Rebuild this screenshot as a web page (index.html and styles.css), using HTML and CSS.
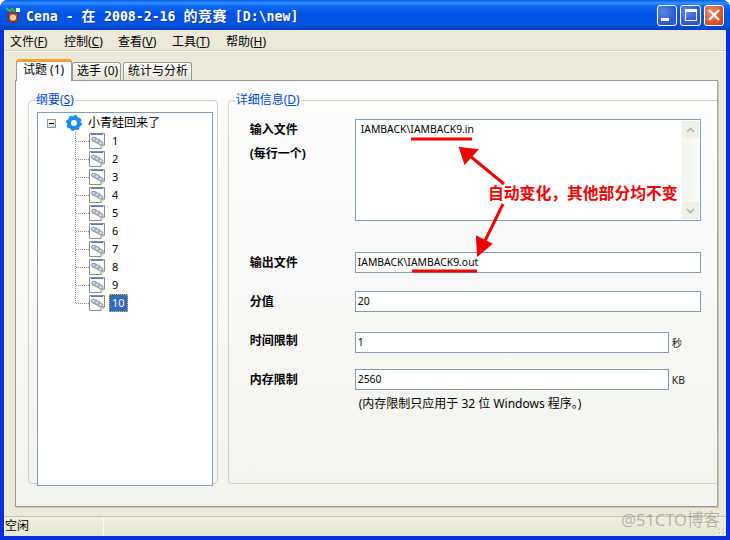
FILE: index.html
```html
<!DOCTYPE html>
<html>
<head>
    <meta charset="utf-8">
    <title>Cena</title>
    <link rel="stylesheet" href="styles.css">
</head>
<body>

<svg class="defs" width="0" height="0">
    <symbol id="case" viewBox="0 0 17 18">
        <path d="M0.500 1.500H15.500V13L12 16.500H0.500Z" fill="#fff" stroke="#8c8c86"/>
        <path d="M2 2.500H14" stroke="#4a7ae0"/>
        <path d="M15.500 13H12V16.500" fill="#f0f0ea" stroke="#8c8c86"/>
        <g fill="#d4d9e4" stroke="#8f97a4">
            <ellipse cx="5.500" cy="7.500" rx="3" ry="2" transform="rotate(25 5.500 7.500)"/>
            <ellipse cx="8.500" cy="9" rx="3" ry="2" transform="rotate(25 8.500 9)"/>
            <ellipse cx="11.500" cy="11" rx="2.500" ry="1.800" transform="rotate(25 11.500 11)"/>
        </g>
    </symbol>
</svg>

<div class="window">
    <div class="titlebar">
        <svg class="app-icon" width="16" height="16" viewBox="0 0 16 16">
            <path d="M3 6H13L12 15H4Z" fill="#d8452c" stroke="#6d2a12"/>
            <circle cx="8" cy="10.500" r="2.500" fill="#f6d75c" stroke="#fff"/>
            <path d="M1 1L6 5M6 1L10 5" stroke="#5aa83c" stroke-width="2"/>
            <path d="M11 1H15V5H11Z" fill="#f5f1e0"/>
        </svg>
        <div class="title-text">Cena - <span class="title-cjk">在</span> 2008-2-16 <span class="title-cjk">的竞赛</span> [D:\new]</div>
        <div class="title-btn min">
            <span class="glyph-min"></span>
        </div>
        <div class="title-btn">
            <span class="glyph-max"></span>
        </div>
        <div class="title-btn close">
            <svg width="14" height="14" viewBox="0 0 14 14"><path d="M2 2L12 12M12 2L2 12" stroke="#fff" stroke-width="2.400"/></svg>
        </div>
    </div>

    <div class="client">
        <div class="menubar">
            <div class="menu-item">文件(<u>F</u>)</div>
            <div class="menu-item">控制(<u>C</u>)</div>
            <div class="menu-item">查看(<u>V</u>)</div>
            <div class="menu-item">工具(<u>T</u>)</div>
            <div class="menu-item">帮助(<u>H</u>)</div>
        </div>

        <div class="tabs">
            <div class="tab active">试题 (1)</div>
            <div class="tab players">选手 (0)</div>
            <div class="tab stats">统计与分析</div>
        </div>

        <div class="tab-page">
            <fieldset class="group outline">
                <legend>纲要(<u>S</u>)</legend>
                <div class="tree">
                    <div class="tree-root">
                        <span class="expander"></span>
                        <svg class="root-icon" width="16" height="16" viewBox="0 0 16 16">
                            <circle cx="8" cy="8" r="5" fill="none" stroke="#1f8ee8" stroke-width="4"/>
                            <circle cx="8" cy="8" r="7" fill="none" stroke="#1f8ee8" stroke-width="2" stroke-dasharray="3 2.500"/>
                        </svg>
                        <span>小青蛙回来了</span>
                    </div>
                    <div class="tree-children" id="cases"></div>
                </div>
            </fieldset>

            <fieldset class="group detail">
                <legend>详细信息(<u>D</u>)</legend>

                <div class="row row-files">
                    <div class="field-label">输入文件<br>(每行一个)</div>
                    <div class="memo">
                        <div class="memo-text">IAMBACK\IAMBACK9.in</div>
                        <div class="scrollbar">
                            <div class="scroll-btn"><svg width="9" height="6" viewBox="0 0 9 6"><path d="M1 5L4.500 1.500L8 5" fill="none" stroke="#b4b4ac" stroke-width="1.600"/></svg></div>
                            <div class="scroll-btn"><svg width="9" height="6" viewBox="0 0 9 6"><path d="M1 1L4.500 4.500L8 1" fill="none" stroke="#b4b4ac" stroke-width="1.600"/></svg></div>
                        </div>
                    </div>
                </div>

                <div class="row row-output">
                    <div class="field-label">输出文件</div>
                    <div class="edit">IAMBACK\IAMBACK9.out</div>
                </div>

                <div class="row row-score">
                    <div class="field-label">分值</div>
                    <div class="edit">20</div>
                </div>

                <div class="row row-time">
                    <div class="field-label raised">时间限制</div>
                    <div class="edit short">1</div>
                    <div class="unit">秒</div>
                </div>

                <div class="row row-mem">
                    <div class="field-label">内存限制</div>
                    <div class="edit short">2560</div>
                    <div class="unit">KB</div>
                </div>

                <div class="note">(内存限制只应用于 32 位 Windows 程序。)</div>
            </fieldset>
        </div>

        <div class="statusbar">
            <div class="status-cell">空闲</div>
            <svg class="grip" width="12" height="12" viewBox="0 0 12 12">
                <path d="M9 1h2v2H9zM5 5h2v2H5zM9 5h2v2H9zM1 9h2v2H1zM5 9h2v2H5zM9 9h2v2H9z" fill="#fff"/>
                <path d="M9 1h1v1H9zM5 5h1v1H5zM9 5h1v1H9zM1 9h1v1H1zM5 9h1v1H5zM9 9h1v1H9z" fill="#a8a795"/>
            </svg>
        </div>
    </div>

    <!-- hand drawn notes lying over the dialog -->
    <svg class="marks" width="730" height="540" viewBox="0 0 730 540">
        <path d="M411 139H472M412 271H477" stroke="#f00000" stroke-width="3"/>
        <path d="M504 184L470 156" stroke="#f00000" stroke-width="3"/>
        <path d="M460 148L477 150L465 163Z" fill="#f00000" stroke="#f00000" stroke-width="2"/>
        <path d="M503 204L483 245" stroke="#f00000" stroke-width="3"/>
        <path d="M478 255L477 237L491 244Z" fill="#f00000" stroke="#f00000" stroke-width="2"/>
    </svg>
    <div class="callout">自动变化，其他部分均不变</div>
    <div class="watermark">@51CTO博客</div>
</div>

<script>
var box = document.getElementById('cases');
var html = '';
for (var i = 1; i <= 10; i++) {
    html += "<div class='case" + (i == 10 ? " selected" : "") + "'><span class='dots'></span>" +
        "<svg width='17' height='18'><use href='#case'/></svg><span class='case-name'>" + i + "</span></div>";
}
box.innerHTML = html;
</script>

</body>
</html>
```

FILE: styles.css
```css
* {
    box-sizing: border-box;
}

body {
    margin: 0;
    background-color: #fff;
    font-family: "Noto Sans", "Noto Sans CJK SC", sans-serif;
    font-size: 11px;
    color: #000;
}

.defs {
    display: block;
}

.window {
    position: relative;
    width: 730px;
    height: 540px;
    overflow: hidden;
    border-radius: 8px 8px 0 0;
    background-color: #0831d9;
    display: flex;
    flex-direction: column;
}

/* title bar */
.titlebar {
    height: 30px;
    flex: none;
    display: flex;
    align-items: center;
    padding: 0 6px 0 5px;
    gap: 3px;
    background: linear-gradient(to bottom, #0058ee 0, #3593ff 3px, #0a6af4 6px, #0053e1 14px, #0055e5 24px, #0046c8 28px, #003dd0 30px);
}

.app-icon {
    flex: none;
    margin: -1px 2px 0 0;
}

.title-text {
    flex: 1;
    margin-top: -1px;
    font-family: "DejaVu Sans Mono", monospace;
    font-size: 13.200px;
    font-weight: bold;
    color: #fff;
    white-space: pre;
    text-shadow: 1px 1px 0 #0f3aa8;
}

.title-cjk {
    font-family: "Noto Sans CJK SC", sans-serif;
    font-size: 14px;
    letter-spacing: 0.500px;
}

.title-btn {
    width: 21px;
    height: 21px;
    flex: none;
    display: flex;
    align-items: center;
    justify-content: center;
    position: relative;
    border: 1px solid #fff;
    border-radius: 3px;
    background: radial-gradient(circle at 30% 30%, #5d84e6, #2c56d0 70%, #3a5fc8);
}

.title-btn.min {
    width: 20px;
}

.title-btn.close {
    width: 20px;
    background: radial-gradient(circle at 30% 30%, #e8906c, #d9512a 65%, #c23a1a);
}

.glyph-min {
    width: 8px;
    height: 3px;
    margin: 9px 5px 0 0;
    background-color: #fff;
}

.glyph-max {
    width: 12px;
    height: 12px;
    border: 1px solid #fff;
    border-top-width: 3px;
}

/* everything inside the blue frame */
.client {
    flex: 1;
    margin: 0 4px 4px 4px;
    background-color: #ece9d8;
    display: flex;
    flex-direction: column;
    min-height: 0;
}

.menubar {
    height: 22px;
    flex: none;
    display: flex;
    align-items: center;
    padding: 0 0 0 6px;
    gap: 13px;
    border-bottom: 1px solid #fbfaf4;
    box-shadow: inset 0 -1px 0 #d2cfbd;
    font-size: 12px;
}

.menu-item {
    width: 41px;
    white-space: nowrap;
}

.tabs {
    flex: none;
    height: 22px;
    margin: 7px 0 0 12px;
    display: flex;
    align-items: flex-end;
    position: relative;
    z-index: 1;
    font-size: 12px;
}

.tab {
    height: 18px;
    margin-right: 2px;
    margin-bottom: 1px;
    padding: 0 0 0 4px;
    line-height: 16px;
    border: 1px solid #919b9c;
    border-bottom: none;
    border-radius: 3px 3px 0 0;
    background: linear-gradient(to bottom, #fff, #f0efe7 60%, #e4e2d4);
    white-space: nowrap;
}

.tab.players {
    width: 49px;
}

.tab.stats {
    width: 69px;
}

.tab.active {
    width: 56px;
    height: 22px;
    margin-bottom: 0;
    margin-right: 0;
    padding: 0 0 0 6px;
    line-height: 16px;
    border-top: 3px solid #f2a22c;
    background: #fcfcfe;
}

.tab-page {
    width: 703px;
    height: 427px;
    flex: none;
    margin: -1px 0 0 11px;
    padding: 12px 0 0 12px;
    display: flex;
    align-items: flex-start;
    gap: 10px;
    border: 1px solid #919b9c;
    border-right-color: #a0a5a8;
    border-bottom-color: #8f98a0;
    box-shadow: 1px 1px 0 #c8c6b6;
    background: linear-gradient(to bottom, #fdfdfe, #f4f3ee);
}

.group {
    margin: 0;
    min-width: 0;
    height: 391px;
    border: 1px solid #d0d0bf;
    border-radius: 4px;
    font-size: 12px;
}

.group legend {
    color: #0046d5;
    padding: 0 1px;
    line-height: 14px;
}

.outline {
    width: 190px;
    padding: 5px 4px 3px 8px;
}

.outline legend {
    margin-left: -2px;
}

.tree {
    height: 374px;
    padding: 2px 0 0 9px;
    background-color: #fff;
    border: 1px solid #7f9db9;
}

.tree-root {
    height: 16px;
    display: flex;
    align-items: center;
    gap: 10px;
    line-height: 16px;
}

.expander {
    position: relative;
    width: 9px;
    height: 9px;
    flex: none;
    border: 1px solid #8a9aa8;
    background: linear-gradient(135deg, #fff, #d8d5c8);
}

.expander::after {
    content: "";
    position: absolute;
    left: 1px;
    top: 3px;
    width: 5px;
    height: 1px;
    background-color: #000;
}

.root-icon {
    flex: none;
    margin-right: -4px;
}

.tree-children {
    margin: 1px 0 0 28px;
    border-left: 1px dotted #8a8a8a;
    height: 171px;
}

.case {
    height: 18px;
    display: flex;
    align-items: center;
}

.dots {
    width: 13px;
    border-top: 1px dotted #8a8a8a;
}

.case-name {
    height: 18px;
    margin-left: 3px;
    padding: 0 3px;
    line-height: 18px;
    font-size: 11px;
}

.selected .case-name {
    background-color: #316ac5;
    color: #fff;
    outline: 1px dotted #f0c000;
    outline-offset: -1px;
}

.detail {
    width: 490px;
    padding: 5px 0 0 21px;
    border-right: none;
    border-radius: 4px 0 0 4px;
}

.detail legend {
    margin-left: -15px;
}

.row {
    display: flex;
    align-items: center;
    height: 21px;
}

.field-label {
    width: 105px;
    flex: none;
    font-weight: bold;
    line-height: 21px;
}

.field-label.raised {
    margin-top: -4px;
}

.row-files {
    height: 102px;
    align-items: flex-start;
    margin-top: 7px;
}

.row-files .field-label {
    margin-top: -1px;
    line-height: 24px;
}

.memo {
    width: 346px;
    height: 102px;
    display: flex;
    border: 1px solid #7f9db9;
    background-color: #fff;
    font-size: 10.400px;
}

.memo-text {
    flex: 1;
    padding: 2px 0 0 5px;
}

.scrollbar {
    width: 17px;
    margin: 1px;
    display: flex;
    flex-direction: column;
    justify-content: space-between;
    background: linear-gradient(to right, #f5f4ee, #fbfbf8);
}

.scroll-btn {
    height: 17px;
    display: flex;
    align-items: center;
    justify-content: center;
    border: 1px solid #eeede5;
    border-radius: 2px;
    background-color: #f0efe8;
}

.edit {
    width: 346px;
    height: 21px;
    padding: 0 0 0 2px;
    line-height: 18px;
    border: 1px solid #7f9db9;
    background-color: #fff;
    font-size: 10.400px;
}

.edit.short {
    width: 314px;
}

.unit {
    margin-left: 3px;
    font-size: 10.400px;
    color: #222;
}

.row-output {
    margin-top: 31px;
}

.row-score {
    margin-top: 18px;
}

.row-time {
    margin-top: 20px;
}

.row-mem {
    margin-top: 16px;
}

.note {
    margin: 6px 0 0 109px;
    line-height: 16px;
    font-size: 12px;
    white-space: nowrap;
}

.statusbar {
    position: relative;
    flex: 1;
    margin-top: 9px;
    display: flex;
    align-items: center;
    border-top: 1px solid #c8c5b2;
    background: linear-gradient(to bottom, #f0eee0, #e8e5d4);
    font-size: 12px;
}

.status-cell {
    width: 100px;
    height: 100%;
    padding: 0 0 0 1px;
    line-height: 18px;
    border-right: 1px solid #fbfaf4;
}

.grip {
    position: absolute;
    right: 0;
    bottom: 0;
}

.marks {
    position: absolute;
    left: 0;
    top: 0;
}

.callout {
    position: absolute;
    left: 488px;
    top: 183px;
    font-family: "Noto Sans CJK SC", sans-serif;
    font-size: 15.800px;
    line-height: 20px;
    font-weight: bold;
    color: #f00000;
    white-space: nowrap;
}

.watermark {
    position: absolute;
    right: 10px;
    bottom: 9px;
    font-size: 16.500px;
    color: rgba(120, 120, 110, 0.5);
    white-space: nowrap;
}
```
